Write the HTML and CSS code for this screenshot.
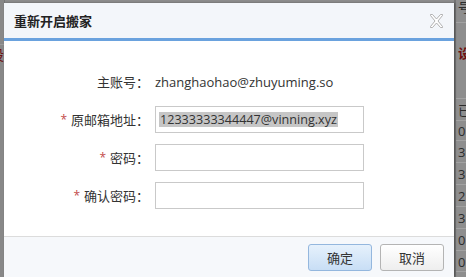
FILE: index.html
```html
<!DOCTYPE html>
<html lang="zh-CN">
<head>
<meta charset="utf-8">
<title>重新开启搬家</title>
<link rel="stylesheet" href="styles.css">
</head>
<body>
<div class="page">
  <div class="side-left">
    <div class="sl-top"></div>
    <div class="sl-red"><span>设</span></div>
    <div class="sl-rest"></div>
  </div>
  <div class="side-right">
    <div class="cell c-top">号</div>
    <div class="cell c-red">设</div>
    <div class="cell">已</div>
    <div class="cell c-short">0</div>
    <div class="cell">3</div>
    <div class="cell">3</div>
    <div class="cell">2</div>
    <div class="cell">3</div>
    <div class="cell">0</div>
    <div class="cell c-last">0</div>
  </div>
</div>

<div class="dialog">
  <div class="dialog-header">
    <span class="dialog-title">重新开启搬家</span>
    <svg class="close" width="15" height="14" viewBox="0 0 15 14" aria-hidden="true">
      <polygon points="1.5,0.5 3.5,0.5 7.5,5 11.5,0.5 13.5,0.5 13.5,1.5 9,7 13.5,12.5 13.5,13.5 11.5,13.5 7.5,9 3.5,13.5 1.5,13.5 1.5,12.5 6,7 1.5,1.5" fill="#fff" stroke="#a8a8a8" stroke-width="0.9"/>
    </svg>
  </div>
  <div class="dialog-body">
    <div class="form">
      <div class="label">主账号：</div>
      <div class="value">zhanghaohao@zhuyuming.so</div>

      <div class="label"><span class="req">*</span>原邮箱地址：</div>
      <div class="input"><span class="sel">12333333344447@vinning.xyz</span></div>

      <div class="label"><span class="req">*</span>密码：</div>
      <div class="input"></div>

      <div class="label"><span class="req">*</span>确认密码：</div>
      <div class="input"></div>
    </div>
  </div>
  <div class="dialog-footer">
    <button class="btn btn-primary">确定</button>
    <button class="btn">取消</button>
  </div>
</div>
</body>
</html>
```

FILE: styles.css
```css
html, body {
  margin: 0;
  padding: 0;
}

body {
  width: 466px;
  height: 277px;
  overflow: hidden;
  background: #8c8c8c;
  font-family: "Open Sans", "Noto Sans CJK SC", sans-serif;
  font-size: 13px;
  color: #333;
  position: relative;
}

/* dimmed page behind the dialog */
.page {
  display: flex;
  justify-content: space-between;
  height: 277px;
  overflow: hidden;
}

.side-left {
  width: 4px;
  display: flex;
  flex-direction: column;
  background: #888;
  border-right: 1px solid #777;
}

.sl-top {
  height: 44px;
  border-bottom: 1px solid #9a9a9a;
}

.sl-red {
  height: 20px;
  overflow: hidden;
  display: flex;
  justify-content: flex-end;
  color: #6e1010;
  font-size: 14px;
  line-height: 20px;
}

.sl-rest {
  flex: 1;
}

.side-right {
  width: 10px;
  padding-left: 2px;
  display: flex;
  flex-direction: column;
  background: #8e8e8e;
  box-shadow: inset 2px 0 0 #747474;
  overflow: hidden;
}

.cell {
  flex: none;
  height: 21px;
  line-height: 22px;
  padding-left: 2px;
  overflow: hidden;
  white-space: nowrap;
  color: #2c2c2c;
  font-size: 13px;
  border-bottom: 1px solid #a2a2a2;
}

.c-top {
  height: 22px;
  line-height: 14px;
}

.c-red {
  height: 75px;
  line-height: 60px;
  color: #6e1010;
  font-weight: bold;
}

.c-short {
  height: 19px;
  line-height: 20px;
}

.c-last {
  height: 20px;
}

/* dialog */
.dialog {
  position: absolute;
  left: 4px;
  top: 3px;
  width: 450px;
  height: 274px;
  background: #fff;
  box-shadow: 1px 0 2px rgba(0, 0, 0, 0.35);
  display: flex;
  flex-direction: column;
  overflow: hidden;
}

.dialog-header {
  box-sizing: border-box;
  padding: 0 10px;
  background: #f3f6fa;
  border-bottom: 3px solid #6aa2de;
  height: 38px;
  flex: none;
  display: flex;
  align-items: center;
  justify-content: space-between;
}

.dialog-title {
  font-weight: bold;
  font-size: 13px;
  color: #222;
}

.close {
  display: block;
}

.dialog-body {
  flex: none;
  height: 195px;
  box-sizing: border-box;
  padding-top: 27px;
}

.form {
  display: grid;
  grid-template-columns: 145px 209px;
  grid-auto-rows: 27px;
  column-gap: 6px;
  row-gap: 11px;
  align-items: center;
}

.label {
  text-align: right;
  color: #333;
  white-space: nowrap;
}

.req {
  color: #c24a4a;
  font-size: 12px;
  margin-right: 4px;
  position: relative;
  top: -1px;
}

.value {
  color: #333;
  white-space: nowrap;
}

.input {
  height: 27px;
  box-sizing: border-box;
  border: 1px solid #c9c9c9;
  background: #fff;
  padding: 0 3px;
  display: flex;
  align-items: center;
  white-space: nowrap;
  overflow: hidden;
}

.sel {
  background: #c6c6c6;
  color: #333;
  font-size: 12.6px;
  line-height: 15px;
  padding: 0 1px;
}

.dialog-footer {
  border-top: 1px solid #dcdcdc;
  background: #f6f8fb;
  padding: 7px 10px 0 0;
  flex: 1;
  display: flex;
  justify-content: flex-end;
  align-items: flex-start;
  gap: 8px;
}

.btn {
  width: 64px;
  height: 27px;
  border-radius: 3px;
  border: 1px solid #b4b4b4;
  background: linear-gradient(#ffffff, #eeeeee);
  font-family: "Open Sans", "Noto Sans CJK SC", sans-serif;
  font-size: 13px;
  color: #333;
  padding: 0;
}

.btn-primary {
  border-color: #94b7de;
  background: linear-gradient(#e6f1fc, #c8def5);
}
```
